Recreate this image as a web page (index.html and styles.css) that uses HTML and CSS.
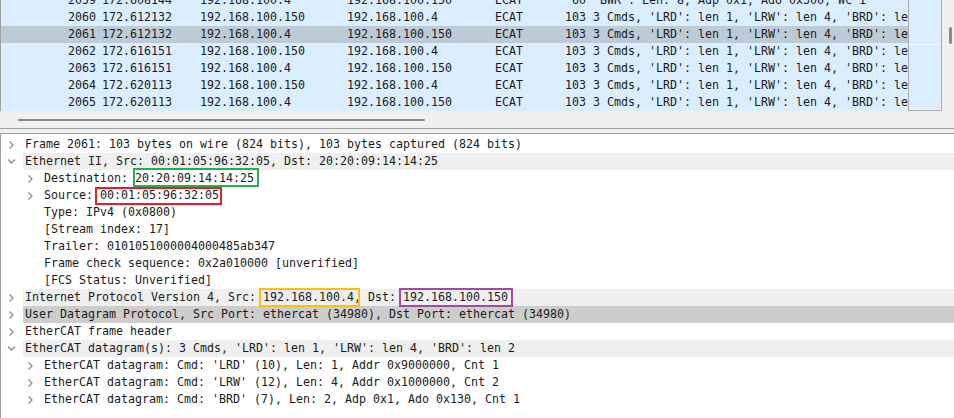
FILE: index.html
```html
<!DOCTYPE html>
<html>
<head>
<meta charset="utf-8">
<title>Packet view</title>
<link rel="stylesheet" href="styles.css">
</head>
<body>
<div class="app">
  <section class="packet-list">
    <div class="list-main">
      <div class="list-view">
        <div class="rows">
          <div class="prow"><span class="c-no">2059</span><span class="c-time">172.608144</span><span class="c-src">192.168.100.4</span><span class="c-dst">192.168.100.150</span><span class="c-proto">ECAT</span><span class="c-len">60</span><span class="c-info">'BWR': Len: 8, Adp 0x1, Ado 0x300, Wc 1</span></div>
          <div class="prow"><span class="c-no">2060</span><span class="c-time">172.612132</span><span class="c-src">192.168.100.150</span><span class="c-dst">192.168.100.4</span><span class="c-proto">ECAT</span><span class="c-len">103</span><span class="c-info">3 Cmds, 'LRD': len 1, 'LRW': len 4, 'BRD': len 2</span></div>
          <div class="prow sel"><span class="c-no">2061</span><span class="c-time">172.612132</span><span class="c-src">192.168.100.4</span><span class="c-dst">192.168.100.150</span><span class="c-proto">ECAT</span><span class="c-len">103</span><span class="c-info">3 Cmds, 'LRD': len 1, 'LRW': len 4, 'BRD': len 2</span></div>
          <div class="prow"><span class="c-no">2062</span><span class="c-time">172.616151</span><span class="c-src">192.168.100.150</span><span class="c-dst">192.168.100.4</span><span class="c-proto">ECAT</span><span class="c-len">103</span><span class="c-info">3 Cmds, 'LRD': len 1, 'LRW': len 4, 'BRD': len 2</span></div>
          <div class="prow"><span class="c-no">2063</span><span class="c-time">172.616151</span><span class="c-src">192.168.100.4</span><span class="c-dst">192.168.100.150</span><span class="c-proto">ECAT</span><span class="c-len">103</span><span class="c-info">3 Cmds, 'LRD': len 1, 'LRW': len 4, 'BRD': len 2</span></div>
          <div class="prow"><span class="c-no">2064</span><span class="c-time">172.620113</span><span class="c-src">192.168.100.150</span><span class="c-dst">192.168.100.4</span><span class="c-proto">ECAT</span><span class="c-len">103</span><span class="c-info">3 Cmds, 'LRD': len 1, 'LRW': len 4, 'BRD': len 2</span></div>
          <div class="prow"><span class="c-no">2065</span><span class="c-time">172.620113</span><span class="c-src">192.168.100.4</span><span class="c-dst">192.168.100.150</span><span class="c-proto">ECAT</span><span class="c-len">103</span><span class="c-info">3 Cmds, 'LRD': len 1, 'LRW': len 4, 'BRD': len 2</span></div>
        </div>
      </div>
      <div class="minimap"><div class="minimap-mark"></div></div>
      <div class="vscroll"><div class="vthumb"></div></div>
    </div>
    <div class="hscroll"><div class="hthumb"></div></div>
  </section>
  <div class="splitter"></div>
  <section class="tree">
    <div class="trow">
      <span class="tw"><svg class="chev-r" width="7" height="10" viewBox="0 0 7 10"><path d="M1.5 1.5L5 5L1.5 8.5"/></svg></span>
      <span class="label">Frame 2061: 103 bytes on wire (824 bits), 103 bytes captured (824 bits)</span>
    </div>
    <div class="trow hl">
      <span class="tw"><svg class="chev-d" width="10" height="7" viewBox="0 0 10 7"><path d="M1 1.5L4.5 5L8 1.5"/></svg></span>
      <span class="label">Ethernet II, Src: 00:01:05:96:32:05, Dst: 20:20:09:14:14:25</span>
    </div>
    <div class="trow l2">
      <span class="tw"><svg class="chev-r" width="7" height="10" viewBox="0 0 7 10"><path d="M1.5 1.5L5 5L1.5 8.5"/></svg></span>
      <span class="label">Destination: <span class="note note-green">20:20:09:14:14:25</span></span>
    </div>
    <div class="trow l2">
      <span class="tw"><svg class="chev-r" width="7" height="10" viewBox="0 0 7 10"><path d="M1.5 1.5L5 5L1.5 8.5"/></svg></span>
      <span class="label">Source: <span class="note note-red">00:01:05:96:32:05</span></span>
    </div>
    <div class="trow l2"><span class="tw"></span><span class="label">Type: IPv4 (0x0800)</span></div>
    <div class="trow l2"><span class="tw"></span><span class="label">[Stream index: 17]</span></div>
    <div class="trow l2"><span class="tw"></span><span class="label">Trailer: 0101051000004000485ab347</span></div>
    <div class="trow l2"><span class="tw"></span><span class="label">Frame check sequence: 0x2a010000 [unverified]</span></div>
    <div class="trow l2"><span class="tw"></span><span class="label">[FCS Status: Unverified]</span></div>
    <div class="trow hl">
      <span class="tw"><svg class="chev-r" width="7" height="10" viewBox="0 0 7 10"><path d="M1.5 1.5L5 5L1.5 8.5"/></svg></span>
      <span class="label">Internet Protocol Version 4, Src: <span class="note note-gold">192.168.100.4</span>, Dst: <span class="note note-purple">192.168.100.150</span></span>
    </div>
    <div class="trow sel">
      <span class="tw"><svg class="chev-r" width="7" height="10" viewBox="0 0 7 10"><path d="M1.5 1.5L5 5L1.5 8.5"/></svg></span>
      <span class="label">User Datagram Protocol, Src Port: ethercat (34980), Dst Port: ethercat (34980)</span>
    </div>
    <div class="trow">
      <span class="tw"><svg class="chev-r" width="7" height="10" viewBox="0 0 7 10"><path d="M1.5 1.5L5 5L1.5 8.5"/></svg></span>
      <span class="label">EtherCAT frame header</span>
    </div>
    <div class="trow hl">
      <span class="tw"><svg class="chev-d" width="10" height="7" viewBox="0 0 10 7"><path d="M1 1.5L4.5 5L8 1.5"/></svg></span>
      <span class="label">EtherCAT datagram(s): 3 Cmds, 'LRD': len 1, 'LRW': len 4, 'BRD': len 2</span>
    </div>
    <div class="trow l2">
      <span class="tw"><svg class="chev-r" width="7" height="10" viewBox="0 0 7 10"><path d="M1.5 1.5L5 5L1.5 8.5"/></svg></span>
      <span class="label">EtherCAT datagram: Cmd: 'LRD' (10), Len: 1, Addr 0x9000000, Cnt 1</span>
    </div>
    <div class="trow l2">
      <span class="tw"><svg class="chev-r" width="7" height="10" viewBox="0 0 7 10"><path d="M1.5 1.5L5 5L1.5 8.5"/></svg></span>
      <span class="label">EtherCAT datagram: Cmd: 'LRW' (12), Len: 4, Addr 0x1000000, Cnt 2</span>
    </div>
    <div class="trow l2">
      <span class="tw"><svg class="chev-r" width="7" height="10" viewBox="0 0 7 10"><path d="M1.5 1.5L5 5L1.5 8.5"/></svg></span>
      <span class="label">EtherCAT datagram: Cmd: 'BRD' (7), Len: 2, Adp 0x1, Ado 0x130, Cnt 1</span>
    </div>
  </section>
</div>
</body>
</html>
```
FILE: styles.css
```css
* {
  box-sizing: border-box;
  margin: 0;
  padding: 0;
}

html, body {
  width: 954px;
  height: 418px;
  overflow: hidden;
}

body {
  background: #f0f0f0;
  font-family: "DejaVu Sans Mono", "Liberation Mono", monospace;
  font-size: 11.63px;
  color: #1b1b1b;
}

.app {
  display: flex;
  flex-direction: column;
  height: 418px;
}

/* ---------- packet list ---------- */
.packet-list {
  flex: none;
  display: flex;
  flex-direction: column;
}

.list-main {
  display: flex;
  height: 111px;
}

.list-view {
  flex: none;
  width: 908px;
  border-left: 1px solid #a0a0a0;
  background: #daeeff;
  overflow: hidden;
}

.rows {
  margin-top: -8px;
}

.prow {
  display: flex;
  height: 17px;
  line-height: 17px;
  white-space: nowrap;
}

.prow.sel {
  background: #bdcbd7;
}

.prow span {
  flex: none;
}

.c-no { width: 95px; text-align: right; }
.c-time { width: 104px; padding-left: 6px; }
.c-src { width: 147px; }
.c-dst { width: 148px; }
.c-proto { width: 55px; }
.c-len { width: 36px; text-align: right; }
.c-info { padding-left: 7px; }

.minimap {
  flex: none;
  width: 34px;
  height: 111px;
  background: #daeeff;
  border-left: 1px solid #ababab;
  border-right: 1px solid #ababab;
  border-bottom: 1px solid #ababab;
  padding-top: 44px;
}

.minimap-mark {
  height: 1px;
  background: #f3f9ff;
}

.vscroll {
  flex: none;
  width: 12px;
  padding: 27px 0 0 7px;
}

.vthumb {
  width: 3px;
  height: 17px;
  border-radius: 1.5px;
  background: #8a8a8a;
}

.hscroll {
  height: 17px;
  padding: 8px 0 0 18px;
}

.hthumb {
  width: 407px;
  height: 2px;
  border-radius: 1px;
  background: #8a8a8a;
}

.splitter {
  flex: none;
  height: 6px;
  border-top: 1px solid #a0a0a0;
  border-bottom: 1px solid #a0a0a0;
}

/* ---------- protocol tree ---------- */
.tree {
  flex: 1;
  background: #ffffff;
  border-left: 1px solid #a0a0a0;
  padding-top: 2px;
}

.trow {
  display: flex;
  height: 17px;
  line-height: 17px;
  white-space: nowrap;
}

.trow.l2 {
  padding-left: 19px;
}

.tw {
  flex: none;
  width: 22px;
  display: flex;
  align-items: center;
  padding-left: 7px;
}

.tw svg {
  display: block;
  fill: none;
  stroke: #8c8c8c;
  stroke-width: 1.3;
}

.tw .chev-d {
  margin-left: -1px;
}

.label {
  flex: 1;
  padding-left: 2px;
}

.trow.hl .label {
  background: #efefef;
}

.trow.sel .label {
  background: #cdcdcd;
}

/* annotation frames drawn over the values */
.note {
  position: relative;
  display: inline-block;
  height: 17px;
}

.note::after {
  content: "";
  position: absolute;
  border: 2px solid;
}

.note-green::after {
  border-color: #22b14c;
  left: -2px;
  right: -5px;
  top: -2px;
  bottom: 0;
}

.note-red::after {
  border-color: #ed1c24;
  left: -5px;
  right: -3px;
  top: 0;
  bottom: -1px;
}

.note-gold::after {
  border-color: #fdc00f;
  left: -4px;
  right: -6px;
  top: -1px;
  bottom: -1px;
}

.note-purple::after {
  border-color: #a349a4;
  left: -4px;
  right: -5px;
  top: -1px;
  bottom: -1px;
}
```
